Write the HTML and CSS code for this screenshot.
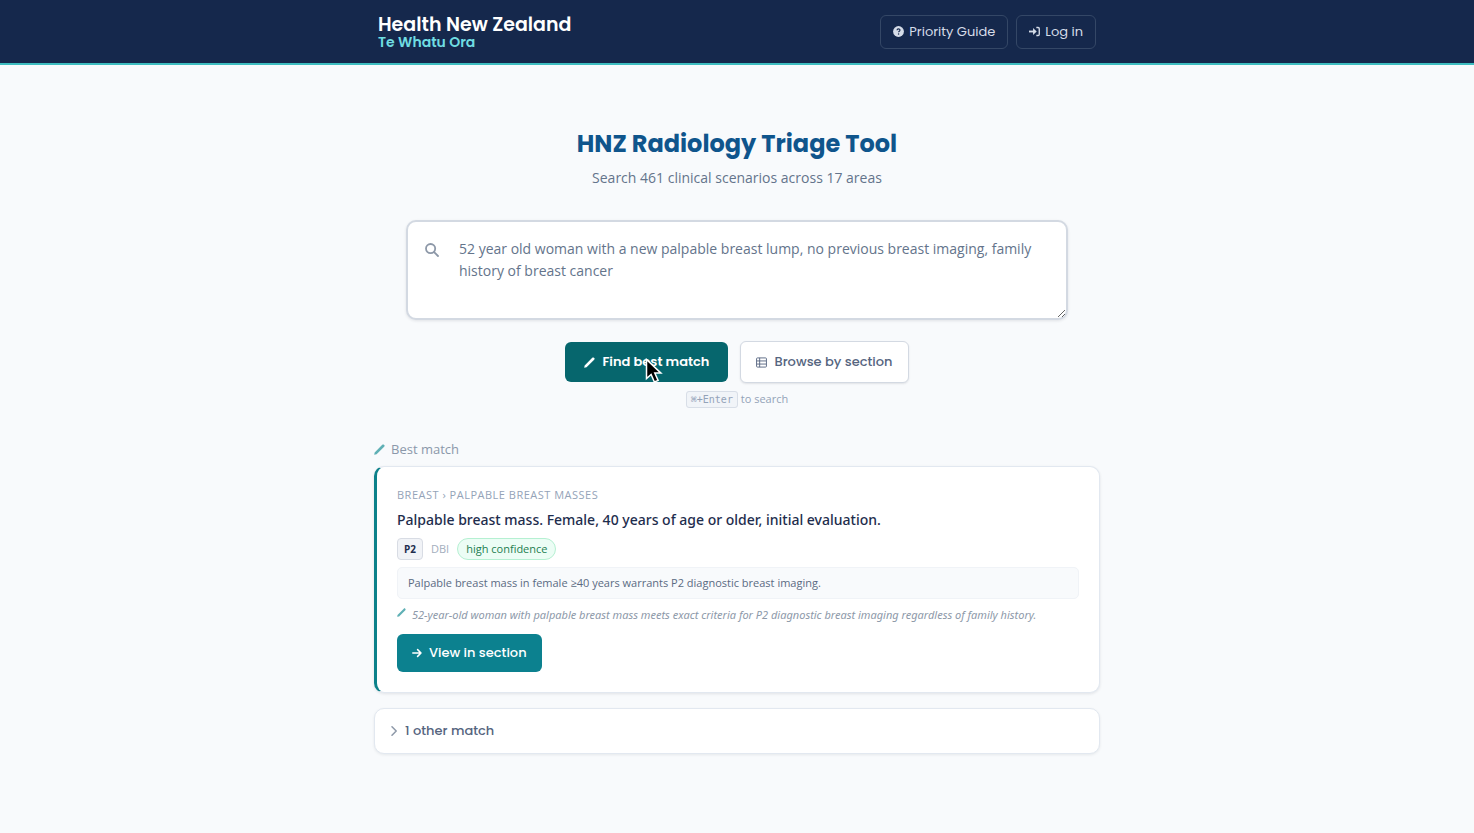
FILE: index.html
```html
<!DOCTYPE html>
<html lang="en">
<head>
  <meta charset="UTF-8" />
  <meta name="viewport" content="width=device-width, initial-scale=1" />
  <title>HNZ Radiology Triage Tool</title>
  <link rel="stylesheet" href="styles.css">
</head>
<body>
  <!-- Header -->
  <header class="site-header">
    <div class="header-inner">
      <a class="brand" href="#">
        <span class="brand-name">Health New Zealand</span>
        <span class="brand-sub">Te Whatu Ora</span>
      </a>
      <nav class="header-nav">
        <a class="nav-btn" href="#guide">
          <svg width="11" height="11" viewBox="0 0 12 12"><circle cx="6" cy="6" r="5.9" fill="currentColor"/><path d="M4.4 4.7c0-2 3.2-2 3.2-.1 0 1.1-1.5 1.2-1.5 2.3" fill="none" stroke="#15284c" stroke-width="1.2"/><circle cx="6.1" cy="8.8" r=".8" fill="#15284c"/></svg>
          Priority Guide
        </a>
        <a class="nav-btn" href="#login">
          <svg width="11" height="11" viewBox="0 0 12 12" fill="none" stroke="currentColor"><path d="M0 6h6.5" stroke-width="2"/><path d="M4.4 2.2 8.4 6 4.4 9.8z" fill="currentColor" stroke="none"/><path d="M8 1.6h1.9c.8 0 1.3.5 1.3 1.3v6.2c0 .8-.5 1.3-1.3 1.3H8" stroke-width="1.5"/></svg>
          Log in
        </a>
      </nav>
    </div>
  </header>

  <main class="container">
    <!-- Search -->
    <section class="hero">
      <h1>HNZ Radiology Triage Tool</h1>
      <p class="subtitle">Search 461 clinical scenarios across 17 areas</p>

      <form class="search-form">
        <div class="search-box">
          <svg class="search-icon" width="14" height="14" viewBox="0 0 14 14" fill="none" stroke="currentColor" stroke-width="1.8" stroke-linecap="round"><circle cx="5.6" cy="5.6" r="4.6"/><path d="M9.1 9.1 13 13"/></svg>
          <textarea class="search-input" aria-label="Clinical scenario">52 year old woman with a new palpable breast lump, no previous breast imaging, family history of breast cancer</textarea>
        </div>
        <div class="actions">
          <button class="btn btn-find" type="button">
            <svg width="11" height="11" viewBox="0 0 12 12" fill="currentColor"><path d="M.2 11.8.7 9.2 9 .9c.6-.6 1.3-.6 1.8-.1l.4.4c.5.5.5 1.2-.1 1.8l-8.3 8.3z"/></svg>
            Find best match
            <svg class="pointer" width="18" height="26" viewBox="0 0 18 26"><path d="M1.5 1.5v19l4.6-4.1 3.3 7.6 3.7-1.6-3.3-7.3h6.1z" fill="#000" stroke="#fff" stroke-width="1.5"/></svg>
          </button>
          <button class="btn btn-browse" type="button">
            <svg width="11" height="11" viewBox="0 0 12 12" fill="none" stroke="currentColor"><rect x=".6" y="1" width="10.8" height="10" rx="1"/><path d="M1 4.3h10M1 7.7h10M4 1v10"/></svg>
            Browse by section
          </button>
        </div>
        <p class="hint"><kbd>⌘+Enter</kbd> to search</p>
      </form>
    </section>

    <!-- Results -->
    <section class="results">
      <h2 class="results-label">
        <svg width="11" height="11" viewBox="0 0 12 12" fill="currentColor"><path d="M.2 11.8.7 9.2 9 .9c.6-.6 1.3-.6 1.8-.1l.4.4c.5.5.5 1.2-.1 1.8l-8.3 8.3z"/></svg>
        Best match
      </h2>

      <article class="match-card">
        <p class="crumb">Breast › Palpable breast masses</p>
        <h3>Palpable breast mass. Female, 40 years of age or older, initial evaluation.</h3>
        <div class="tags">
          <span class="priority">P2</span>
          <span class="code">DBI</span>
          <span class="confidence">high confidence</span>
        </div>
        <p class="note">Palpable breast mass in female ≥40 years warrants P2 diagnostic breast imaging.</p>
        <p class="reason">
          <svg width="9" height="9" viewBox="0 0 12 12" fill="currentColor"><path d="M.2 11.8.7 9.2 9 .9c.6-.6 1.3-.6 1.8-.1l.4.4c.5.5.5 1.2-.1 1.8l-8.3 8.3z"/></svg>
          52-year-old woman with palpable breast mass meets exact criteria for P2 diagnostic breast imaging regardless of family history.
        </p>
        <a class="btn btn-view" href="#section">
          <svg width="10" height="10" viewBox="0 0 10 10" fill="none" stroke="currentColor" stroke-width="1.5" stroke-linecap="round" stroke-linejoin="round"><path d="M.8 5h8.2M5.6 1.6 9 5 5.6 8.4"/></svg>
          View in section
        </a>
      </article>

      <button class="other-matches" type="button" aria-expanded="false">
        <svg width="6" height="10" viewBox="0 0 6 10" fill="none" stroke="currentColor" stroke-width="1.5" stroke-linecap="round" stroke-linejoin="round"><path d="M1 .8 5.2 5 1 9.2"/></svg>
        1 other match
      </button>
    </section>
  </main>
</body>
</html>
```

FILE: styles.css
```css
* {
  box-sizing: border-box;
}

body {
  margin: 0;
  font-family: 'Open Sans', 'Noto Sans', sans-serif;
  background-color: #f8fafc;
  color: #1e2d4d;
}

h1, h2, h3, p {
  margin: 0;
}

svg {
  flex-shrink: 0;
}

/* Header */
.site-header {
  background-color: #15284c;
  border-bottom: 2px solid #3dbdc0;
}

.header-inner {
  display: flex;
  justify-content: space-between;
  align-items: center;
  max-width: 718px;
  min-height: 63px;
  margin: 0 auto;
}

.brand {
  display: flex;
  flex-direction: column;
  font-family: Poppins, Inter, sans-serif;
  text-decoration: none;
}

.brand-name {
  font-size: 19px;
  font-weight: 600;
  line-height: 21px;
  color: #fff;
}

.brand-sub {
  font-size: 14px;
  font-weight: 600;
  line-height: 15px;
  color: #6fdde2;
}

.header-nav {
  display: flex;
  gap: 8px;
}

.nav-btn {
  display: flex;
  align-items: center;
  gap: 5px;
  padding: 6px 12px;
  border: 1px solid #344766;
  border-radius: 6px;
  font-family: Poppins, Inter, sans-serif;
  font-size: 13px;
  line-height: 20px;
  color: #d5dce8;
  text-decoration: none;
}

/* Search */
.container {
  max-width: 726px;
  margin: 0 auto;
  padding: 61px 0;
}

.hero {
  text-align: center;
}

h1 {
  font-family: Poppins, Inter, sans-serif;
  font-size: 24px;
  font-weight: 700;
  line-height: 36px;
  color: #0f558c;
}

.subtitle {
  margin-top: 5px;
  font-size: 14px;
  line-height: 22px;
  color: #64748b;
}

.search-form {
  margin: 31px 32px 0;
}

.search-box {
  position: relative;
}

.search-icon {
  position: absolute;
  left: 19px;
  top: 23px;
  color: #8d98a8;
}

.search-input {
  display: block;
  width: 100%;
  height: 100px;
  padding: 16px 18px 16px 51px;
  border: 2px solid #d3d9e2;
  border-radius: 10px;
  background-color: #fff;
  box-shadow: 0 1px 3px rgba(15, 23, 42, 0.1);
  font-family: inherit;
  font-size: 14px;
  line-height: 22px;
  color: #64748b;
  resize: vertical;
}

.actions {
  display: flex;
  justify-content: center;
  align-items: center;
  gap: 12px;
  margin-top: 21px;
}

.btn {
  display: inline-flex;
  align-items: center;
  gap: 7px;
  border: none;
  border-radius: 6px;
  font-family: Poppins, Inter, sans-serif;
  font-size: 13px;
  line-height: 20px;
  cursor: pointer;
}

.btn-find {
  position: relative;
  padding: 10px 19px;
  background-color: #06666d;
  font-weight: 600;
  color: #fff;
}

.pointer {
  position: absolute;
  left: 80px;
  top: 16px;
}

.btn-browse {
  padding: 10px 15px;
  border: 1px solid #d3d9e2;
  background-color: #fff;
  box-shadow: 0 1px 2px rgba(15, 23, 42, 0.1);
  font-weight: 500;
  color: #566580;
}

.hint {
  margin-top: 7px;
  font-size: 11px;
  line-height: 18px;
  color: #94a3b8;
}

.hint kbd {
  padding: 2px 4px;
  border: 1px solid #d8dee7;
  border-radius: 3px;
  background-color: #f1f4f8;
  font-family: 'DejaVu Sans Mono', monospace;
  font-size: 10px;
}

/* Results */
.results {
  margin-top: 31px;
}

.results-label {
  display: flex;
  align-items: center;
  gap: 6px;
  font-size: 13px;
  font-weight: 400;
  line-height: 18px;
  color: #8b98aa;
}

.results-label svg {
  color: #5fb0b5;
}

.match-card {
  margin-top: 8px;
  padding: 20px;
  border: 1px solid #e2e8f0;
  border-left: 3px solid #0c818a;
  border-radius: 10px;
  background-color: #fff;
  box-shadow: 0 1px 3px rgba(15, 23, 42, 0.1);
}

.crumb {
  font-size: 11px;
  line-height: 16px;
  letter-spacing: 0.5px;
  text-transform: uppercase;
  color: #94a3b8;
}

.match-card h3 {
  margin-top: 7px;
  font-family: 'Noto Sans', sans-serif;
  font-size: 14px;
  font-weight: 500;
  line-height: 20px;
}

.tags {
  display: flex;
  align-items: center;
  gap: 8px;
  margin-top: 8px;
  font-size: 11px;
  line-height: 18px;
}

.priority {
  padding: 1px 6px;
  border: 1px solid #d8dce4;
  border-radius: 4px;
  background-color: #f1f3f7;
  font-size: 10px;
  font-weight: 700;
}

.code {
  color: #a3aebd;
}

.confidence {
  padding: 1px 8px;
  border: 1px solid #b5f0d2;
  border-radius: 12px;
  background-color: #ecfdf5;
  color: #1c7d50;
}

.note {
  margin-top: 7px;
  padding: 6px 10px;
  border: 1px solid #f0f3f7;
  border-radius: 5px;
  background-color: #f8fafc;
  font-size: 11px;
  line-height: 18px;
  color: #5b6b83;
}

.reason {
  display: flex;
  gap: 6px;
  margin-top: 7px;
  font-family: 'Noto Sans', sans-serif;
  font-size: 11px;
  font-style: italic;
  line-height: 18px;
  color: #8d99a9;
}

.reason svg {
  margin-top: 2px;
  color: #5fb0b5;
}

.btn-view {
  margin-top: 10px;
  padding: 9px 15px;
  background-color: #0c818f;
  font-weight: 500;
  line-height: 20px;
  color: #fff;
  text-decoration: none;
}

.other-matches {
  display: flex;
  align-items: center;
  gap: 8px;
  width: 100%;
  margin-top: 15px;
  padding: 12px 16px;
  border: 1px solid #e2e8f0;
  border-radius: 10px;
  background-color: #fff;
  box-shadow: 0 1px 3px rgba(15, 23, 42, 0.08);
  font-family: Poppins, Inter, sans-serif;
  font-size: 13px;
  font-weight: 500;
  line-height: 20px;
  color: #566580;
  cursor: pointer;
}

.other-matches svg {
  color: #8d98a8;
}

@media (max-width: 768px) {
  .header-inner,
  .container {
    padding-left: 16px;
    padding-right: 16px;
  }

  .search-form {
    margin-left: 0;
    margin-right: 0;
  }
}
```
